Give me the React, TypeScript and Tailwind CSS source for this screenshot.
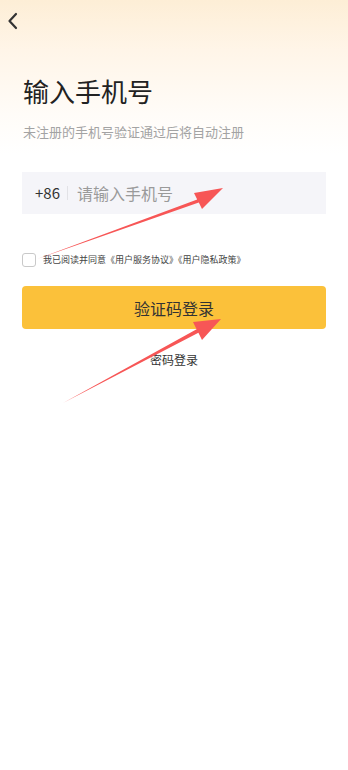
import React from "react"

const font = { fontFamily: '"Noto Sans CJK SC", "Noto Sans", sans-serif' }

const Arrow = ({ tail, tip, wingA, wingB }: any) => {
    const neckA = [wingA[0] + (wingB[0] - wingA[0]) * 0.4, wingA[1] + (wingB[1] - wingA[1]) * 0.4]
    const neckB = [wingA[0] + (wingB[0] - wingA[0]) * 0.6, wingA[1] + (wingB[1] - wingA[1]) * 0.6]
    const pts = [tail, neckA, wingA, tip, wingB, neckB].map((p) => p.join(",")).join(" ")
    return <polygon points={pts} fill="#f75656" />
}

const App = () => {
    return (
        <div
            className="relative w-[348px] min-h-[770px] bg-[linear-gradient(180deg,#fdeed6_0px,#fff5e8_50px,#fffcf8_115px,#ffffff_155px)] text-[#222]"
            style={font}
        >
            <div className="h-[41px] flex items-center pl-[7px]">
                <svg width="12" height="18" viewBox="0 0 12 18" fill="none">
                    <path d="M9 2 L2.5 9 L9 16" stroke="#333" strokeWidth="2.2" strokeLinecap="round" strokeLinejoin="round" />
                </svg>
            </div>

            <div className="px-[22px]">
                <h1 className="mt-[32px] text-[26px] leading-[36px] font-normal text-[#222] pl-[1px]">输入手机号</h1>
                <p className="mt-[14px] text-[13px] leading-[18px] text-[#a3a3a3] pl-[1px]">未注册的手机号验证通过后将自动注册</p>

                <div className="mt-[31px] h-[42px] bg-[#f5f5f9] flex items-center pl-[13px]">
                    <span className="text-[15px] text-[#333]">+86</span>
                    <span className="ml-[7px] mr-[9px] w-px h-[14px] bg-[#e2e2e6]" />
                    <span className="text-[16px] text-[#9a9a9a]">请输入手机号</span>
                </div>

                <div className="mt-[38px] h-[15px] flex items-center">
                    <span className="w-[14px] h-[14px] rounded-[3px] border border-[#c9c9c9] bg-white" />
                    <span className="ml-[7px] text-[9px] text-[#444] whitespace-nowrap">我已阅读并同意《用户服务协议》《用户隐私政策》</span>
                </div>

                <button className="mt-[19px] w-full h-[43px] rounded-[4px] bg-[#fbc13a] text-[16px] text-[#333]">
                    验证码登录
                </button>

                <p className="mt-[22px] text-center text-[12px] leading-[18px] text-[#333]">密码登录</p>
            </div>

            <svg className="absolute inset-0 pointer-events-none" width="348" height="770" viewBox="0 0 348 770">
                <Arrow tail={[37, 259]} tip={[223, 188]} wingA={[194, 193]} wingB={[202, 209]} />
                <Arrow tail={[63, 403]} tip={[221, 319]} wingA={[193, 322]} wingB={[202, 340]} />
            </svg>
        </div>
    )
}

export default App
